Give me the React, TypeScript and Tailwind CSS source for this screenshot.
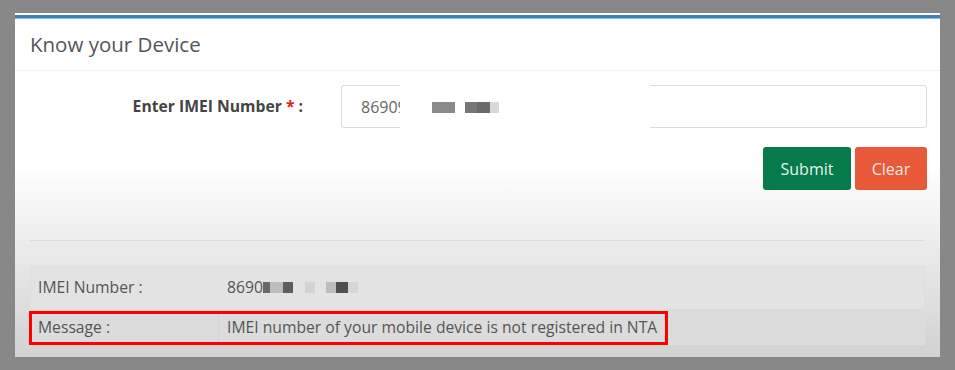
import { useState } from 'react'

const font = { fontFamily: '"Open Sans", "Noto Sans", sans-serif' }

// pixel blocks that hide the real number in the screenshot
const Blocks = ({ items }: { items: { w: number; c: string; gap?: number }[] }) => (
  <span className="inline-flex items-center">
    {items.map((b, i) => (
      <span
        key={i}
        className="inline-block h-[11px]"
        style={{ width: b.w, background: b.c, marginLeft: b.gap ?? 0 }}
      />
    ))}
  </span>
)

const App = () => {
  const [imei, setImei] = useState('86909')

  return (
    <div className="w-[955px] h-[370px] bg-[#888888] pt-[13px] pl-[15px]" style={font}>
      <div className="relative w-[925px] h-[344px] border-t-[2px] border-white bg-gradient-to-b from-white from-[44%] via-[#ebebeb] via-[68%] to-[#d2d2d2] overflow-hidden">
        {/* top accent */}
        <div className="h-[4px] bg-[#3f80b8] border-b border-[#7ec0e8]" />

        {/* header */}
        <div className="h-[52px] flex items-center pl-[15px] border-b border-[#f2f2f2]">
          <h2 className="text-[20.5px] text-[#555] leading-none">Know your Device</h2>
        </div>

        {/* form */}
        <div className="pt-[14px] pr-[13px]">
          <div className="flex items-center">
            <label className="w-[288px] text-right text-[15.7px] font-bold text-[#444]">
              Enter IMEI Number <span className="text-[#e02020]">*</span> :
            </label>
            <input
              value={imei}
              onChange={e => setImei(e.target.value)}
              className="ml-[38px] h-[43px] flex-1 border border-[#dcdcdc] rounded-[3px] pl-[19px] text-[16px] text-[#666] outline-none bg-white"
            />
          </div>
          <div className="flex justify-end gap-[4px] mt-[19px]">
            <button className="w-[88px] h-[43px] rounded-[3px] bg-[#077a4b] text-[#e8f3ee] text-[16px]">Submit</button>
            <button className="w-[72px] h-[43px] rounded-[3px] bg-[#e8593a] text-[#fbe6e0] text-[16px]">Clear</button>
          </div>
        </div>

        {/* divider */}
        <div className="mx-[15px] mt-[50px] h-px bg-[#dcdcdc]" />

        {/* result table */}
        <div className="mx-[15px] mt-[25px] border border-[#dedede] text-[15.7px] text-[#555]">
          <div className="flex h-[42px] items-center bg-[#e3e3e3]">
            <div className="w-[188px] pl-[7px]">IMEI Number :</div>
            <div className="flex items-center pl-[8px]">
              8690
              <Blocks
                items={[
                  { w: 7, c: '#6a6a6a' },
                  { w: 13, c: '#bdbdbd' },
                  { w: 10, c: '#5e5e5e' },
                  { w: 10, c: '#d4d4d4', gap: 12 },
                  { w: 10, c: '#bdbdbd', gap: 11 },
                  { w: 12, c: '#505050' },
                  { w: 10, c: '#d6d6d6' },
                ]}
              />
            </div>
          </div>
          <div className="flex h-[35px] items-center pt-[2px] bg-[#dcdcdc]">
            <div className="w-[188px] pl-[7px] h-full flex items-center border-r border-[#d4d4d4]">Message :</div>
            <div className="pl-[8px]">IMEI number of your mobile device is not registered in NTA</div>
          </div>
        </div>

        {/* blur patch over the typed number */}
        <div className="absolute left-[385px] top-[68px] w-[250px] h-[48px] bg-white flex items-center pl-[32px]">
          <Blocks
            items={[
              { w: 23, c: '#8a8a8a' },
              { w: 12, c: '#777777', gap: 10 },
              { w: 13, c: '#6a6a6a' },
              { w: 9, c: '#d8d8d8' },
            ]}
          />
        </div>

        {/* annotation box */}
        <div className="absolute left-[14px] top-[296px] w-[639px] h-[34px] border-[3px] border-[#ff0000]" />
      </div>
    </div>
  )
}

export default App
